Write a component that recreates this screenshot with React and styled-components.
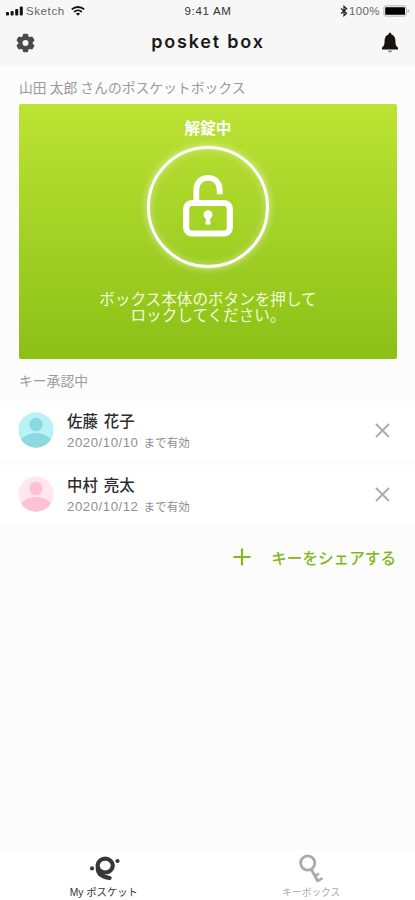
import React from 'react';
import styled, { createGlobalStyle } from 'styled-components';

const GlobalStyle = createGlobalStyle`
  * {
    box-sizing: border-box;
  }

  body {
    margin: 0;
    background: #fcfcfc;
    font-family: "Liberation Sans", "Noto Sans CJK JP", sans-serif;
  }
`;

const Screen = styled.div`
  display: flex;
  flex-direction: column;
  width: 100%;
  height: 900px;
  overflow: hidden;
  background: #fcfcfc;
`;

const Header = styled.header`
  height: 66px;
  background: #f7f7f7;
`;

const StatusBar = styled.div`
  display: grid;
  grid-template-columns: 1fr auto 1fr;
  align-items: center;
  height: 22px;
  padding: 0 5px 0 6px;
  color: #333;
  font-size: 11px;
  line-height: 22px;
`;

const StatusGroup = styled.div`
  display: flex;
  align-items: center;
  justify-content: ${({ $end }) => ($end ? 'flex-end' : 'flex-start')};
  color: #666;
`;

const Clock = styled.span`
  font-size: 11.5px;
  letter-spacing: 0.7px;
`;

const Carrier = styled.span`
  margin: 0 6px 0 3px;
  font-size: 11.5px;
  letter-spacing: 0.6px;
`;

const Battery = styled.span`
  margin: 0 3px 0 1px;
  font-size: 11.5px;
  letter-spacing: 0.4px;
`;

const NavBar = styled.div`
  display: flex;
  align-items: center;
  justify-content: space-between;
  height: 41px;
  padding: 0 16px;
`;

const Logo = styled.h1`
  margin: 0;
  padding-bottom: 1px;
  color: #1a1a1a;
  font-family: Inter, sans-serif;
  font-size: 18px;
  font-weight: 600;
  line-height: 22px;
  letter-spacing: 1.8px;
`;

const IconButton = styled.button`
  display: flex;
  padding: 0;
  border: 0;
  background: none;
`;

const Content = styled.main`
  flex: 1;
`;

const SectionTitle = styled.h2`
  margin: 0;
  padding: ${({ $top }) => $top}px 19px 0;
  height: ${({ $height }) => $height}px;
  color: #9a9a9a;
  font-family: "Noto Sans CJK JP", sans-serif;
  font-size: 13.8px;
  font-weight: 400;
  line-height: 20px;
`;

const LockCard = styled.section`
  display: flex;
  flex-direction: column;
  align-items: center;
  height: 255px;
  margin: 0 18px 0 19px;
  padding-top: 12px;
  border-radius: 2px;
  background: linear-gradient(#bce334, #8bc017);
  color: #fff;
  font-family: "Noto Sans CJK JP", sans-serif;
`;

const LockState = styled.div`
  font-size: 15.6px;
  font-weight: 700;
  line-height: 22px;
`;

const LockCircle = styled.div`
  display: flex;
  align-items: center;
  justify-content: center;
  width: 122px;
  height: 122px;
  margin-top: 8px;
  padding-bottom: 3px;
  border: 3px solid #fff;
  border-radius: 50%;
  box-shadow: 0 0 8px rgba(255, 255, 255, 0.6), inset 0 0 8px rgba(255, 255, 255, 0.4);
`;

const LockMessage = styled.p`
  margin: 22px 0 0;
  color: #f4fbd9;
  font-size: 15.6px;
  line-height: 16px;
  text-align: center;
`;

const KeyRow = styled.div`
  display: flex;
  align-items: center;
  height: 59px;
  margin-bottom: 5px;
  padding: 0 25px 1px 18px;
  background: #fff;
`;

const KeyInfo = styled.div`
  flex: 1;
  margin-left: 13px;
  padding-top: 1px;
`;

const KeyName = styled.div`
  color: #2b2b2b;
  font-family: "Noto Sans CJK JP", sans-serif;
  font-size: 15.4px;
  font-weight: 500;
  line-height: 20px;
  word-spacing: 2.5px;
`;

const KeyLimit = styled.div`
  display: flex;
  align-items: center;
  height: 22px;
  padding-top: 4px;
  gap: 5px;
  color: #8f8f8f;
`;

const LimitDate = styled.span`
  font-size: 13.2px;
  letter-spacing: 0.55px;
`;

const LimitNote = styled.span`
  margin-top: -1px;
  font-family: "Noto Sans CJK JP", sans-serif;
  font-size: 11.6px;
`;

const ShareButton = styled.button`
  display: flex;
  align-items: center;
  gap: 20px;
  height: 24px;
  margin: 16px 19px 0 auto;
  padding: 0;
  border: 0;
  background: none;
  color: #83b81a;
  font-family: "Noto Sans CJK JP", sans-serif;
  font-size: 15.6px;
  font-weight: 500;
`;

const ShareArea = styled.div`
  display: flex;
`;

const TabBar = styled.nav`
  display: grid;
  grid-template-columns: 1fr 1fr;
  height: 50px;
  background: #fff;
`;

const Tab = styled.div`
  display: flex;
  flex-direction: column;
  align-items: center;
  padding-top: 3px;
  color: ${({ $active }) => ($active ? '#333' : '#aaa')};
  font-family: "Liberation Sans", "Noto Sans CJK JP", sans-serif;
  font-size: ${({ $active }) => ($active ? '10.3px' : '9.7px')};
  line-height: 14px;
`;

const TabLabel = styled.span`
  margin-top: 3px;
`;

const keys = [
  { name: '佐藤 花子', date: '2020/10/10', light: '#b9f2f7', dark: '#8cd9df' },
  { name: '中村 亮太', date: '2020/10/12', light: '#ffe7ee', dark: '#ffc1d3' },
];

function SignalIcon() {
  return (
    <svg width="17" height="10" viewBox="0 0 17 10" fill="#111">
      <rect x="0" y="6" width="3" height="3.5" rx="1" />
      <rect x="4.6" y="5" width="3" height="4.5" rx="1" />
      <rect x="9.2" y="3" width="3" height="6.5" rx="1" />
      <rect x="13.8" y="0.5" width="3" height="9" rx="1" />
    </svg>
  );
}

function WifiIcon() {
  return (
    <svg width="14" height="10" viewBox="0 0 14 10" fill="none" stroke="#111">
      <path d="M0.8 3.4C4.3 0.2 9.7 0.2 13.2 3.4" strokeWidth="1.8" />
      <path d="M3.1 5.8C5.3 3.8 8.7 3.8 10.9 5.8" strokeWidth="1.7" />
      <path d="M4.9 7.5Q7 5.8 9.1 7.5L7 9.7Z" fill="#111" stroke="none" />
    </svg>
  );
}

function BluetoothIcon() {
  return (
    <svg width="8" height="12" viewBox="0 0 8 12" fill="none" stroke="#222" strokeWidth="1.2">
      <path d="M1 3.5L6.6 8.2L4 10.7V1.3L6.6 3.8L1 8.5" />
    </svg>
  );
}

function BatteryIcon() {
  return (
    <svg width="27" height="12" viewBox="0 0 27 12">
      <rect x="0.8" y="0.8" width="22.6" height="10.4" rx="2" fill="#eee" stroke="#bbb" />
      <rect x="2.2" y="2.2" width="19.8" height="7.6" rx="0.6" fill="#000" />
      <path d="M24.6 4Q26.5 4.5 26.5 6T24.6 8Z" fill="#bbb" />
    </svg>
  );
}

function GearIcon() {
  return (
    <svg width="19" height="20" viewBox="-9.5 -10 19 20">
      <g fill="#4a4a4a">
        {[0, 60, 120].map((angle) => (
          <rect key={angle} x="-2.7" y="-9.2" width="5.4" height="18.4" rx="1.3" transform={`rotate(${angle})`} />
        ))}
        <circle r="7.3" />
      </g>
      <circle r="3" fill="#f7f7f7" />
    </svg>
  );
}

function BellIcon() {
  return (
    <svg width="18" height="22" viewBox="0 0 18 22">
      <path d="M9 0.8C8 0.8 7.6 1.5 7.6 2.4C4.9 3.2 3.6 5.5 3.6 8.5C3.6 12.5 3 14 1 15.7V17.6H17V15.7C15 14 14.4 12.5 14.4 8.5C14.4 5.5 13.1 3.2 10.4 2.4C10.4 1.5 10 0.8 9 0.8Z" fill="#171310" />
      <path d="M6.7 18.5H11.3Q10.8 20.5 9 20.5T6.7 18.5Z" fill="#8a8a8a" />
    </svg>
  );
}

function UnlockIcon() {
  return (
    <svg width="50" height="62" viewBox="0 0 50 62" fill="none" stroke="#fff">
      <rect x="3.2" y="28" width="43.6" height="30.5" rx="5.5" strokeWidth="6.2" />
      <path d="M13.3 27V15.5C13.3 7 18.4 2.9 25 2.9S36.7 7 36.7 15.5V19.3" strokeWidth="5.8" />
      <circle cx="25" cy="39.7" r="4.5" fill="#fff" stroke="none" />
      <path d="M23.3 41H26.7L27.6 49.5H22.4Z" fill="#fff" stroke="none" />
    </svg>
  );
}

function Avatar({ id, light, dark }) {
  return (
    <svg width="36" height="36" viewBox="0 0 36 36">
      <clipPath id={id}>
        <circle cx="18" cy="18" r="17.7" />
      </clipPath>
      <g clipPath={`url(#${id})`}>
        <rect width="36" height="36" fill={light} />
        <circle cx="18" cy="12.5" r="6.7" fill={dark} />
        <ellipse cx="18" cy="33" rx="16.5" ry="12" fill={dark} />
      </g>
    </svg>
  );
}

function CloseIcon() {
  return (
    <svg width="15" height="15" viewBox="0 0 15 15" stroke="#aaa" strokeWidth="1.8">
      <path d="M1 1L14 14M14 1L1 14" />
    </svg>
  );
}

function PlusIcon() {
  return (
    <svg width="18" height="18" viewBox="0 0 18 18" stroke="currentColor" strokeWidth="2.2">
      <path d="M9 0.5V17.5M0.5 9H17.5" />
    </svg>
  );
}

function PosketIcon() {
  return (
    <svg width="32" height="30" viewBox="0 0 32 30" fill="none" stroke="#383838">
      <ellipse cx="17.2" cy="12.6" rx="7.6" ry="6.9" strokeWidth="4.2" />
      <path d="M9.8 14.5C9.5 20.5 14 23.8 21.6 25" strokeWidth="4.2" strokeLinecap="round" />
      <circle cx="4" cy="15.4" r="2.1" fill="#383838" stroke="none" />
      <circle cx="29.5" cy="8" r="2.1" fill="#383838" stroke="none" />
    </svg>
  );
}

function KeyIcon() {
  return (
    <svg width="26" height="30" viewBox="0 0 26 30" fill="none" stroke="#aaa">
      <circle cx="9.7" cy="10" r="7.1" strokeWidth="2.9" />
      <path d="M13.3 16.5L20 28.3" strokeWidth="3" />
      <path d="M16.8 23L20.9 20.6M19 28.5L24.6 25.2" strokeWidth="2.6" />
    </svg>
  );
}

export default function App() {
  return (
    <Screen>
      <GlobalStyle />
      <Header>
        <StatusBar>
          <StatusGroup>
            <SignalIcon />
            <Carrier>Sketch</Carrier>
            <WifiIcon />
          </StatusGroup>
          <Clock>9:41 AM</Clock>
          <StatusGroup $end>
            <BluetoothIcon />
            <Battery>100%</Battery>
            <BatteryIcon />
          </StatusGroup>
        </StatusBar>
        <NavBar>
          <IconButton aria-label="settings">
            <GearIcon />
          </IconButton>
          <Logo>posket box</Logo>
          <IconButton aria-label="notifications">
            <BellIcon />
          </IconButton>
        </NavBar>
      </Header>

      <Content>
        <SectionTitle $top={11} $height={38}>山田 太郎 さんのポスケットボックス</SectionTitle>
        <LockCard>
          <LockState>解錠中</LockState>
          <LockCircle>
            <UnlockIcon />
          </LockCircle>
          <LockMessage>
            ボックス本体のボタンを押して
            <br />
            ロックしてください。
          </LockMessage>
        </LockCard>

        <SectionTitle $top={11} $height={42}>キー承認中</SectionTitle>
        {keys.map((item, index) => (
          <KeyRow key={item.name}>
            <Avatar id={`avatar-${index}`} light={item.light} dark={item.dark} />
            <KeyInfo>
              <KeyName>{item.name}</KeyName>
              <KeyLimit>
                <LimitDate>{item.date}</LimitDate>
                <LimitNote>まで有効</LimitNote>
              </KeyLimit>
            </KeyInfo>
            <IconButton aria-label="remove">
              <CloseIcon />
            </IconButton>
          </KeyRow>
        ))}

        <ShareArea>
          <ShareButton>
            <PlusIcon />
            キーをシェアする
          </ShareButton>
        </ShareArea>
      </Content>

      <TabBar>
        <Tab $active>
          <PosketIcon />
          <TabLabel>My ポスケット</TabLabel>
        </Tab>
        <Tab>
          <KeyIcon />
          <TabLabel>キーボックス</TabLabel>
        </Tab>
      </TabBar>
    </Screen>
  );
}
